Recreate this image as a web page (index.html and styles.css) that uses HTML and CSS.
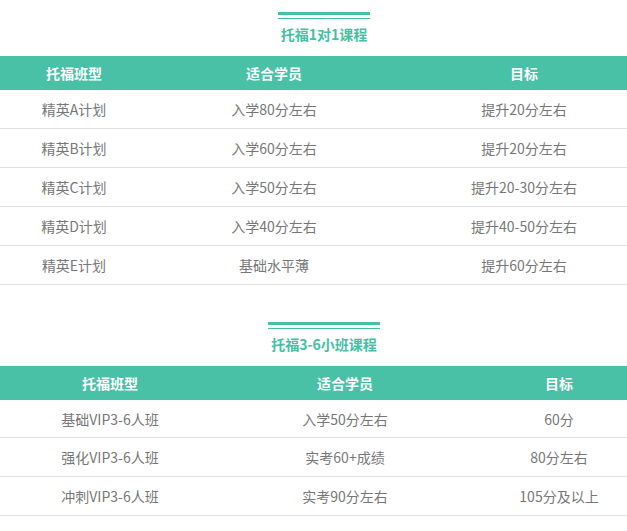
FILE: index.html
```html
<!DOCTYPE html>
<html lang="zh">
<head>
<meta charset="utf-8">
<link rel="stylesheet" href="styles.css">
</head>
<body>
<div class="page">
  <section class="block">
    <div class="title-wrap"><div class="title"><span class="bar-thick"></span><span class="bar-thin"></span><span class="title-text">托福1对1课程</span></div></div>
    <div class="table t1">
      <div class="row head"><div>托福班型</div><div>适合学员</div><div>目标</div></div>
      <div class="row"><div>精英A计划</div><div>入学80分左右</div><div>提升20分左右</div></div>
      <div class="row"><div>精英B计划</div><div>入学60分左右</div><div>提升20分左右</div></div>
      <div class="row"><div>精英C计划</div><div>入学50分左右</div><div>提升20-30分左右</div></div>
      <div class="row"><div>精英D计划</div><div>入学40分左右</div><div>提升40-50分左右</div></div>
      <div class="row"><div>精英E计划</div><div>基础水平薄</div><div>提升60分左右</div></div>
    </div>
  </section>
  <section class="block second">
    <div class="title-wrap"><div class="title"><span class="bar-thick"></span><span class="bar-thin"></span><span class="title-text">托福3-6小班课程</span></div></div>
    <div class="table t2">
      <div class="row head"><div>托福班型</div><div>适合学员</div><div>目标</div></div>
      <div class="row"><div>基础VIP3-6人班</div><div>入学50分左右</div><div>60分</div></div>
      <div class="row"><div>强化VIP3-6人班</div><div>实考60+成绩</div><div>80分左右</div></div>
      <div class="row"><div>冲刺VIP3-6人班</div><div>实考90分左右</div><div>105分及以上</div></div>
    </div>
  </section>
</div>
</body>
</html>
```

FILE: styles.css
```css
html, body {
  margin: 0;
  padding: 0;
  background: #fff;
  overflow: hidden;
}
body {
  font-family: "Noto Sans CJK SC", "Noto Sans", sans-serif;
  font-size: 14px;
  color: #777;
}
.page {
  width: 648px;
}
.block.second {
  margin-top: 25px;
}
.title-wrap {
  display: flex;
  justify-content: center;
  padding-top: 12px;
  height: 56px;
  box-sizing: border-box;
}
.title {
  display: flex;
  flex-direction: column;
  align-items: stretch;
}
.bar-thick {
  height: 3px;
  background: #45c0a3;
}
.bar-thin {
  height: 1px;
  margin-top: 3px;
  background: #45c0a3;
}
.title-text {
  margin-top: 6px;
  padding: 0 3px;
  font-size: 14px;
  font-weight: bold;
  line-height: 18px;
  color: #45c0a3;
  text-align: center;
  white-space: nowrap;
}
.row {
  display: grid;
  height: 39px;
  box-sizing: border-box;
  border-bottom: 1px solid #e1e1e1;
  align-items: center;
  text-align: center;
  line-height: 20px;
}
.t1 .row {
  grid-template-columns: 148px 252px 1fr;
}
.t2 .row {
  grid-template-columns: 220px 250px 1fr;
}
.row.head {
  height: 34px;
  border-bottom: 0;
  background: #49c1a6;
  color: #fff;
  font-weight: bold;
}
.t2 .row {
  height: 38px;
}
.t2 .row:nth-child(3), .t2 .row:nth-child(4) {
  height: 39px;
}
.t2 .row.head {
  height: 34px;
}
```
